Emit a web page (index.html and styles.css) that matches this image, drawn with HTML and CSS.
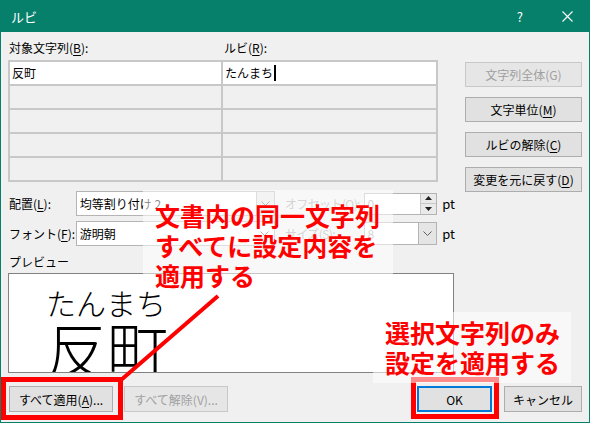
FILE: index.html
```html
<!DOCTYPE html>
<html lang="ja">
<head>
<meta charset="utf-8">
<title>ルビ</title>
<link rel="stylesheet" href="styles.css">
</head>
<body>
<div class="win">
  <div class="titlebar">
    <span class="title">ルビ</span>
    <span class="help">?</span>
    <svg class="close" width="11" height="11" viewBox="0 0 11 11"><path d="M0.5 0.5 L10.5 10.5 M10.5 0.5 L0.5 10.5" stroke="#fff" stroke-width="1.1" fill="none"/></svg>
  </div>
  <div class="main">
    <div class="left">
      <div class="heads">
        <span class="h1">対象文字列(<u>B</u>):</span>
        <span class="h2">ルビ(<u>R</u>):</span>
      </div>
      <div class="grid">
        <div class="cell w">反町</div>
        <div class="cell w">たんまち<span class="caret"></span></div>
        <div class="cell"></div><div class="cell"></div>
        <div class="cell"></div><div class="cell"></div>
        <div class="cell"></div><div class="cell"></div>
        <div class="cell"></div><div class="cell"></div>
      </div>
      <div class="opt opt1">
        <span class="olab">配置(<u>L</u>):</span>
        <div class="combo">
          <span class="val">均等割り付け 2</span>
          <span class="dd pressed"><svg width="9" height="5" viewBox="0 0 9 5"><path d="M0.5 0.5 L4.5 4.5 L8.5 0.5" stroke="#606060" fill="none"/></svg></span>
        </div>
        <span class="olab2">オフセット(O):</span>
        <div class="spin">
          <span class="val dis">0</span>
          <span class="spinbtns">
            <span class="sb"><svg width="7" height="4" viewBox="0 0 7 4"><path d="M0 4 L3.5 0 L7 4 Z" fill="#222"/></svg></span>
            <span class="sb"><svg width="7" height="4" viewBox="0 0 7 4"><path d="M0 0 L3.5 4 L7 0 Z" fill="#222"/></svg></span>
          </span>
        </div>
        <span class="pt">pt</span>
      </div>
      <div class="opt opt2">
        <span class="olab">フォント(<u>F</u>):</span>
        <div class="combo">
          <span class="val">游明朝</span>
          <span class="dd"><svg width="9" height="5" viewBox="0 0 9 5"><path d="M0.5 0.5 L4.5 4.5 L8.5 0.5" stroke="#606060" fill="none"/></svg></span>
        </div>
        <span class="olab2">サイズ(S):</span>
        <div class="spin size">
          <span class="val dis">8</span>
          <span class="dd pressed"><svg width="9" height="5" viewBox="0 0 9 5"><path d="M0.5 0.5 L4.5 4.5 L8.5 0.5" stroke="#606060" fill="none"/></svg></span>
        </div>
        <span class="pt">pt</span>
      </div>
      <div class="plab">プレビュー</div>
      <div class="preview">
        <div class="ruby">たんまち</div>
        <div class="base">反町</div>
      </div>
    </div>
    <div class="side">
      <div class="btn dis">文字列全体(G)</div>
      <div class="btn">文字単位(<u>M</u>)</div>
      <div class="btn">ルビの解除(<u>C</u>)</div>
      <div class="btn">変更を元に戻す(<u>D</u>)</div>
    </div>
  </div>
  <div class="bottom">
    <div class="btn b1">すべて適用(<u>A</u>)...</div>
    <div class="btn b2 dis">すべて解除(V)...</div>
    <div class="btn ok">OK</div>
    <div class="btn cancel">キャンセル</div>
  </div>

  <svg class="marks" width="590" height="423" viewBox="0 0 590 423">
    <line x1="121" y1="380" x2="218" y2="296" stroke="#ff0000" stroke-width="4"/>
    <rect x="3.5" y="379.5" width="117" height="38" fill="none" stroke="#ff0000" stroke-width="5"/>
    <rect x="413.5" y="379.5" width="83" height="37" fill="none" stroke="#ff0000" stroke-width="5"/>
  </svg>
  <div class="ann ann1">文書内の同一文字列<br>すべてに設定内容を<br>適用する</div>
  <div class="ann ann2">選択文字列のみ<br>設定を適用する</div>
</div>
</body>
</html>
```
FILE: styles.css
```css
* { box-sizing: border-box; }
html, body { margin: 0; padding: 0; }
body {
  width: 590px;
  height: 423px;
  overflow: hidden;
  background: #f0f0f0;
  font-family: "Noto Sans CJK JP", "Noto Sans", sans-serif;
  font-size: 12px;
  color: #000;
}
u { text-decoration: underline; text-underline-offset: 2px; }
.win {
  position: relative;
  width: 590px;
  height: 423px;
  background: #f0f0f0;
  border: 1px solid #07806b;
  border-top: 0;
}
.titlebar {
  height: 32px;
  margin: 0 -1px;
  background: #07806b;
  color: #fff;
  display: flex;
  align-items: center;
  padding-left: 11px;
}
.title { font-size: 13px; }
.help { margin-left: auto; font-size: 13px; }
.close { margin-left: 39px; margin-right: 17px; }

.main { display: flex; }
.left { margin-left: 7px; width: 447px; }
.heads { height: 28px; display: flex; align-items: center; padding-top: 2px; }
.h1 { width: 216px; padding-left: 1px; }
.grid {
  width: 430px;
  display: grid;
  grid-template-columns: 211px 213px;
  grid-auto-rows: 22px;
  gap: 2px;
  padding: 2px;
  background: #c8c8c8;
}
.cell { background: #f0f0f0; padding-left: 2px; line-height: 22px; display: flex; align-items: center; }
.cell.w { background: #fff; }
.caret { display: inline-block; width: 2px; height: 16px; background: #000; margin-left: 1px; }

.opt { display: flex; align-items: center; height: 25px; }
.opt1 { margin-top: 9px; }
.opt2 { margin-top: 5px; }
.olab { width: 68px; padding-left: 1px; white-space: nowrap; }
.combo {
  width: 200px;
  height: 25px;
  border: 1px solid #b4b4b4;
  background: #fff;
  display: flex;
  align-items: stretch;
}
.val { flex: 1; padding-left: 3px; display: flex; align-items: center; }
.dd { width: 18px; display: flex; align-items: center; justify-content: center; }
.dd.pressed { background: #e5e5e5; border-left: 1px solid #b4b4b4; }
.olab2 { width: 79px; margin-left: 10px; color: #a0a0a0; white-space: nowrap; letter-spacing: -0.6px; }
.spin {
  width: 74px;
  height: 22px;
  border: 1px solid #b4b4b4;
  background: #fff;
  display: flex;
  align-items: stretch;
}
.spin.size { height: 23px; }
.dis { color: #a0a0a0; }
.spinbtns { width: 16px; display: flex; flex-direction: column; border-left: 1px solid #c8c8c8; }
.sb { flex: 1; display: flex; align-items: center; justify-content: center; background: #eaeaea; }
.sb + .sb { border-top: 1px solid #c8c8c8; }
.pt { margin-left: 5px; font-size: 13px; }

.plab { height: 27px; padding-top: 8px; line-height: 16px; padding-left: 1px; }
.preview {
  width: 446px;
  height: 100px;
  border: 1px solid #828282;
  background: #fff;
  overflow: hidden;
  padding-left: 37px;
  padding-top: 13px;
  font-weight: 300;
}
.ruby { font-size: 30px; line-height: 30px; letter-spacing: 0; }
.base { font-size: 61px; line-height: 61px; }

.side {
  margin-left: 10px;
  width: 117px;
  padding-top: 30px;
  display: flex;
  flex-direction: column;
  gap: 10px;
}
.btn {
  height: 25px;
  border: 1px solid #adadad;
  background: #e1e1e1;
  display: flex;
  align-items: center;
  justify-content: center;
  white-space: nowrap;
}
.btn.dis { border-color: #c8c8c8; background: #e6e6e6; }

.bottom { display: flex; margin-top: 13px; padding-left: 8px; padding-right: 7px; }
.bottom .btn { height: 26px; }
.b1 { width: 104px; }
.b2 { width: 104px; margin-left: 11px; }
.ok { width: 75px; margin-left: auto; border-color: #0078d7; box-shadow: inset 0 0 0 1px #0078d7; }
.cancel { width: 78px; margin-left: 12px; }

.marks { position: absolute; left: -1px; top: 0; pointer-events: none; }
.ann {
  position: absolute;
  background: rgba(255, 255, 255, 0.55);
  color: #ff0000;
  font-weight: 700;
  font-size: 25px;
  line-height: 30px;
  white-space: nowrap;
}
.ann1 { left: 142px; top: 190px; width: 250px; height: 100px; padding: 10px 0 0 12px; }
.ann2 { left: 372px; top: 312px; width: 198px; height: 71px; padding: 5px 0 0 12px; }
```
